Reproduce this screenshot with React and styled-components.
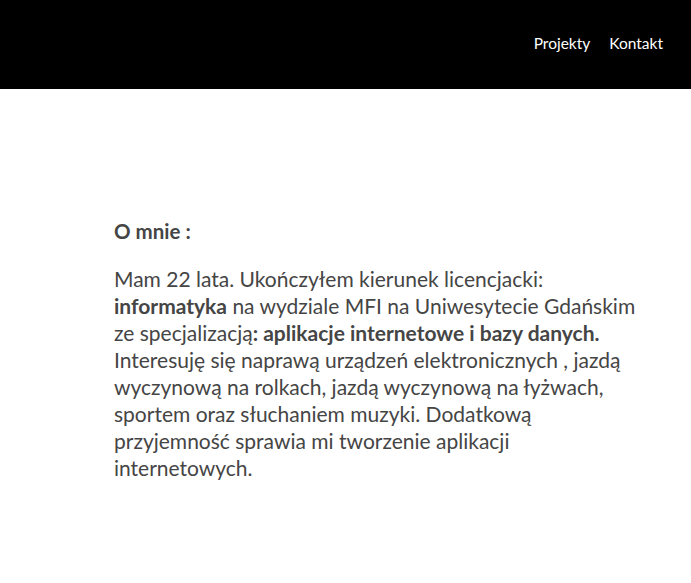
import React from "react";
import styled, { createGlobalStyle } from "styled-components";

const Global = createGlobalStyle`
  html, body { margin: 0; padding: 0; background: #fff; }
  body { font-family: Lato, "Open Sans", sans-serif; }
`;

const Header = styled.header`
  height: 89px;
  background: #000;
  display: flex;
  justify-content: flex-end;
  align-items: center;
  padding: 0 28px 4px 0;
  box-sizing: border-box;
`;

const Nav = styled.nav`
  display: flex;
  gap: 19px;
`;

const NavLink = styled.a`
  color: #fff;
  font-size: 15.5px;
  text-decoration: none;
`;

const Main = styled.main`
  padding: 129px 0 0 114px;
  color: #454545;
`;

const Heading = styled.h2`
  margin: 0 0 20px;
  font-size: 20.5px;
  line-height: 27px;
  font-weight: 700;
`;

const Para = styled.p`
  margin: 0;
  font-size: 21px;
  line-height: 27px;
  white-space: nowrap;
`;

const Strong = styled.b`
  font-weight: 700;
`;

export default function App() {
  return (
    <>
      <Global />
      <Header>
        <Nav>
          <NavLink href="#">Projekty</NavLink>
          <NavLink href="#">Kontakt</NavLink>
        </Nav>
      </Header>
      <Main>
        <Heading>O mnie :</Heading>
        <Para>
          Mam 22 lata. Ukończyłem kierunek licencjacki:
          <br />
          <Strong>informatyka</Strong> na wydziale MFI na Uniwesytecie Gdańskim
          <br />
          ze specjalizacją<Strong>: aplikacje internetowe i bazy danych.</Strong>
          <br />
          Interesuję się naprawą urządzeń elektronicznych , jazdą
          <br />
          wyczynową na rolkach, jazdą wyczynową na łyżwach,
          <br />
          sportem oraz słuchaniem muzyki. Dodatkową
          <br />
          przyjemność sprawia mi tworzenie aplikacji
          <br />
          internetowych.
        </Para>
      </Main>
    </>
  );
}
